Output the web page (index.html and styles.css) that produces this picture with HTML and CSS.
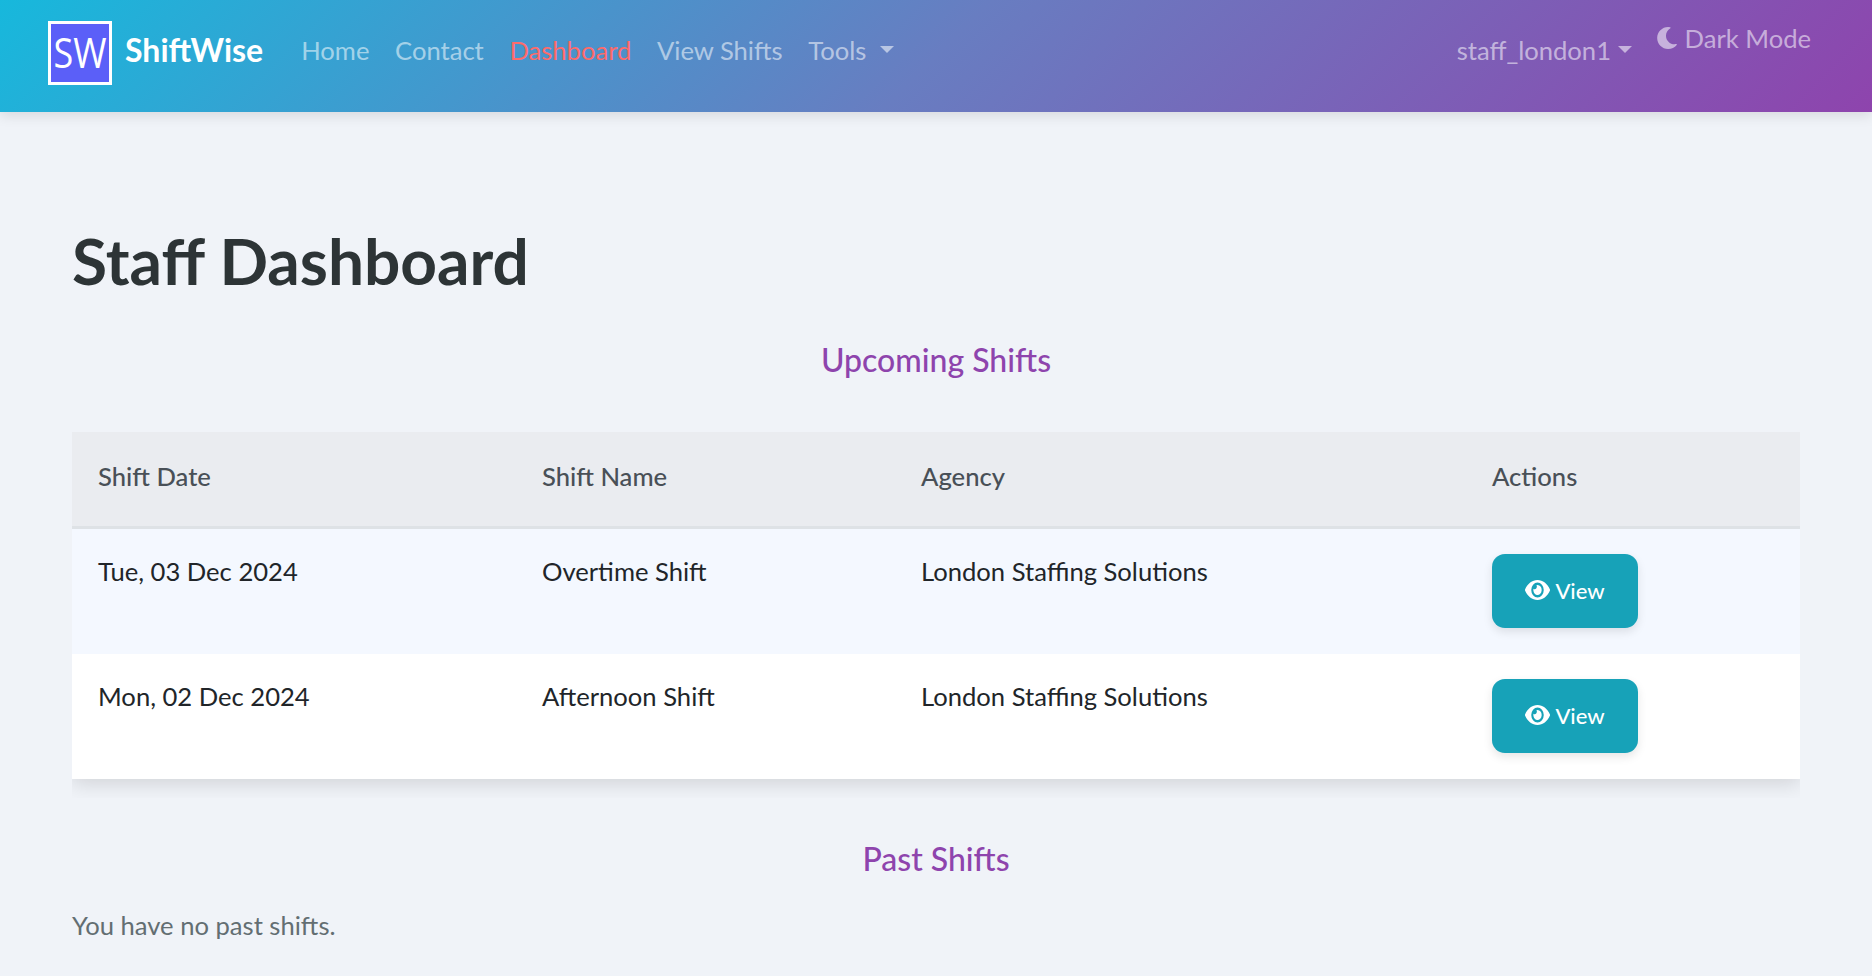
FILE: index.html
```html
<!DOCTYPE html>
<html lang="en">
<head>
  <meta charset="UTF-8" />
  <meta name="viewport" content="width=device-width, initial-scale=1.0" />
  <title>Staff Dashboard</title>
  <link rel="stylesheet" href="styles.css">
</head>
<body>

  <nav class="navbar">
    <a class="brand" href="#">
      <span class="brand-logo"><span class="brand-letters">SW</span></span>
      <span class="brand-name">ShiftWise</span>
    </a>
    <ul class="nav-links">
      <li><a href="#">Home</a></li>
      <li><a href="#">Contact</a></li>
      <li><a href="#" class="active">Dashboard</a></li>
      <li><a href="#">View Shifts</a></li>
      <li><a href="#" class="caret">Tools</a></li>
    </ul>
    <div class="nav-right">
      <a href="#" class="caret user-link">staff_london1</a>
      <a href="#" class="dark-toggle">
        <svg class="moon" viewBox="0 0 512 512" aria-hidden="true"><path d="M283.2 512c79 0 151.100-35.900 198.900-94.800 7.100-8.700-.6-21.400-11.600-19.300-124.200 23.700-238.300-71.600-238.300-197 0-72.200 38.700-138.600 101.500-174.400 9.700-5.500 7.300-20.200-3.700-22.200A258.200 258.200 0 0 0 283.200 0c-141.300 0-256 114.500-256 256 0 141.300 114.500 256 256 256z"/></svg>
        Dark Mode
      </a>
    </div>
  </nav>

  <main class="container">
    <h1>Staff Dashboard</h1>

    <h2>Upcoming Shifts</h2>
    <div class="table-wrap">
      <table>
        <thead>
          <tr>
            <th class="col-date">Shift Date</th>
            <th class="col-name">Shift Name</th>
            <th class="col-agency">Agency</th>
            <th class="col-actions">Actions</th>
          </tr>
        </thead>
        <tbody>
          <tr>
            <td>Tue, 03 Dec 2024</td>
            <td>Overtime Shift</td>
            <td>London Staffing Solutions</td>
            <td class="cell-action">
              <a href="#" class="btn-view">
                <svg class="eye" viewBox="0 64 576 384" preserveAspectRatio="none" aria-hidden="true"><path d="M572.500 241.400C518.300 135.600 410.900 64 288 64S57.700 135.600 3.500 241.400a32.400 32.400 0 0 0 0 29.200C57.700 376.400 165.100 448 288 448s230.300-71.600 284.500-177.400a32.400 32.400 0 0 0 0-29.200zM288 400a144 144 0 1 1 144-144 143.900 143.900 0 0 1-144 144zm0-240a95.300 95.300 0 0 0-25.300 3.800 47.900 47.900 0 0 1-66.900 66.900A95.800 95.800 0 1 0 288 160z"/></svg>
                View
              </a>
            </td>
          </tr>
          <tr>
            <td>Mon, 02 Dec 2024</td>
            <td>Afternoon Shift</td>
            <td>London Staffing Solutions</td>
            <td class="cell-action">
              <a href="#" class="btn-view">
                <svg class="eye" viewBox="0 64 576 384" preserveAspectRatio="none" aria-hidden="true"><path d="M572.500 241.400C518.300 135.600 410.900 64 288 64S57.700 135.600 3.500 241.400a32.400 32.400 0 0 0 0 29.200C57.700 376.400 165.100 448 288 448s230.300-71.600 284.500-177.400a32.400 32.400 0 0 0 0-29.200zM288 400a144 144 0 1 1 144-144 143.900 143.900 0 0 1-144 144zm0-240a95.300 95.300 0 0 0-25.300 3.800 47.900 47.900 0 0 1-66.900 66.900A95.800 95.800 0 1 0 288 160z"/></svg>
                View
              </a>
            </td>
          </tr>
        </tbody>
      </table>
    </div>

    <h2 class="past-title">Past Shifts</h2>
    <p class="empty">You have no past shifts.</p>
  </main>

</body>
</html>
```

FILE: styles.css
```css
html {
  overflow: hidden;
}
body {
  font-family: Lato, 'Noto Sans', sans-serif;
  font-size: 25.6px;
  line-height: 1.5;
  background: #f0f3f8;
  color: #212529;
  margin: 0;
  height: 976px;
  overflow: hidden;
}
a {
  text-decoration: none;
}
.navbar {
  position: relative;
  height: 112px;
  box-sizing: border-box;
  padding: 0 61px 6px 48px;
  display: flex;
  align-items: center;
  background: linear-gradient(135deg, #17b8dc 0%, #687dc1 50%, #8e44ad 100%);
  box-shadow: 0 4px 12px rgba(0, 0, 0, 0.1);
}
.brand {
  display: flex;
  align-items: center;
  gap: 13px;
  margin-right: 38px;
}
.brand-logo {
  display: flex;
  align-items: center;
  justify-content: center;
  width: 64px;
  height: 64px;
  box-sizing: border-box;
  border: 3px solid #fff;
  background: #5b5ff8;
  color: #fff;
}
.brand-letters {
  font-family: 'Open Sans', sans-serif;
  font-size: 36px;
  font-weight: 400;
  line-height: 1;
  transform: scaleY(1.18);
}
.brand-name {
  margin-bottom: 6px;
  font-size: 32px;
  font-weight: 700;
  color: #fff;
}
.nav-links {
  display: flex;
  gap: 25.6px;
  list-style: none;
  margin: 0 0 6px;
  padding: 0;
}
.nav-links a,
.nav-right a {
  color: rgba(255, 255, 255, 0.55);
}
.nav-links a.active {
  color: #ff6b6b;
}
.caret::after {
  content: "";
  display: inline-block;
  margin-left: 14px;
  vertical-align: .255em;
  border-top: .3em solid;
  border-left: .3em solid transparent;
  border-right: .3em solid transparent;
}
.nav-right {
  margin-left: auto;
  margin-bottom: 6px;
  display: flex;
  align-items: center;
  gap: 24px;
}
.user-link::after {
  margin-left: 7px;
}
.dark-toggle {
  margin-top: -24px;
}
.moon {
  width: 22px;
  height: 22px;
  fill: currentColor;
  vertical-align: -1px;
}
.container {
  padding: 0 72px;
}
h1 {
  margin: 0;
  padding-top: 111px;
  font-size: 64px;
  font-weight: 700;
  line-height: 1.2;
  color: #2d3436;
}
h2 {
  margin: 0;
  padding-top: 41px;
  font-size: 32px;
  font-weight: 500;
  line-height: 1.2;
  text-align: center;
  color: #8e44ad;
}
.table-wrap {
  margin-top: 52.8px;
  padding-bottom: 19px;
  overflow: hidden;
}
table {
  width: 100%;
  border-collapse: collapse;
  table-layout: fixed;
  background: #fff;
  box-shadow: 0 4px 20px rgba(0, 0, 0, 0.14);
}
th {
  height: 96px;
  box-sizing: border-box;
  padding: 0 26px 6px;
  text-align: left;
  font-weight: 500;
  color: #495057;
  background: #eaecf0;
  border-bottom: 3px solid #dee2e6;
}
.col-date { width: 444px; }
.col-name { width: 379px; }
.col-agency { width: 571px; }
.col-actions { width: 334px; }
td {
  padding: 23px 26px 26px;
  vertical-align: top;
}
td.cell-action {
  padding-top: 25px;
}
tbody tr:nth-child(odd) {
  background: #f4f8ff;
}
.btn-view {
  display: flex;
  align-items: center;
  justify-content: center;
  gap: 5px;
  width: 146px;
  height: 74px;
  box-sizing: border-box;
  padding-bottom: 2px;
  border-radius: 13px;
  background: #17a2b8;
  color: #fff;
  font-size: 22px;
  font-weight: 500;
  box-shadow: 0 4px 10px rgba(0, 0, 0, 0.1);
}
.eye {
  width: 25px;
  height: 20px;
  fill: currentColor;
}
.past-title {
  padding-top: 42px;
}
.empty {
  margin: 27px 0 0;
  color: #636e72;
}
```
